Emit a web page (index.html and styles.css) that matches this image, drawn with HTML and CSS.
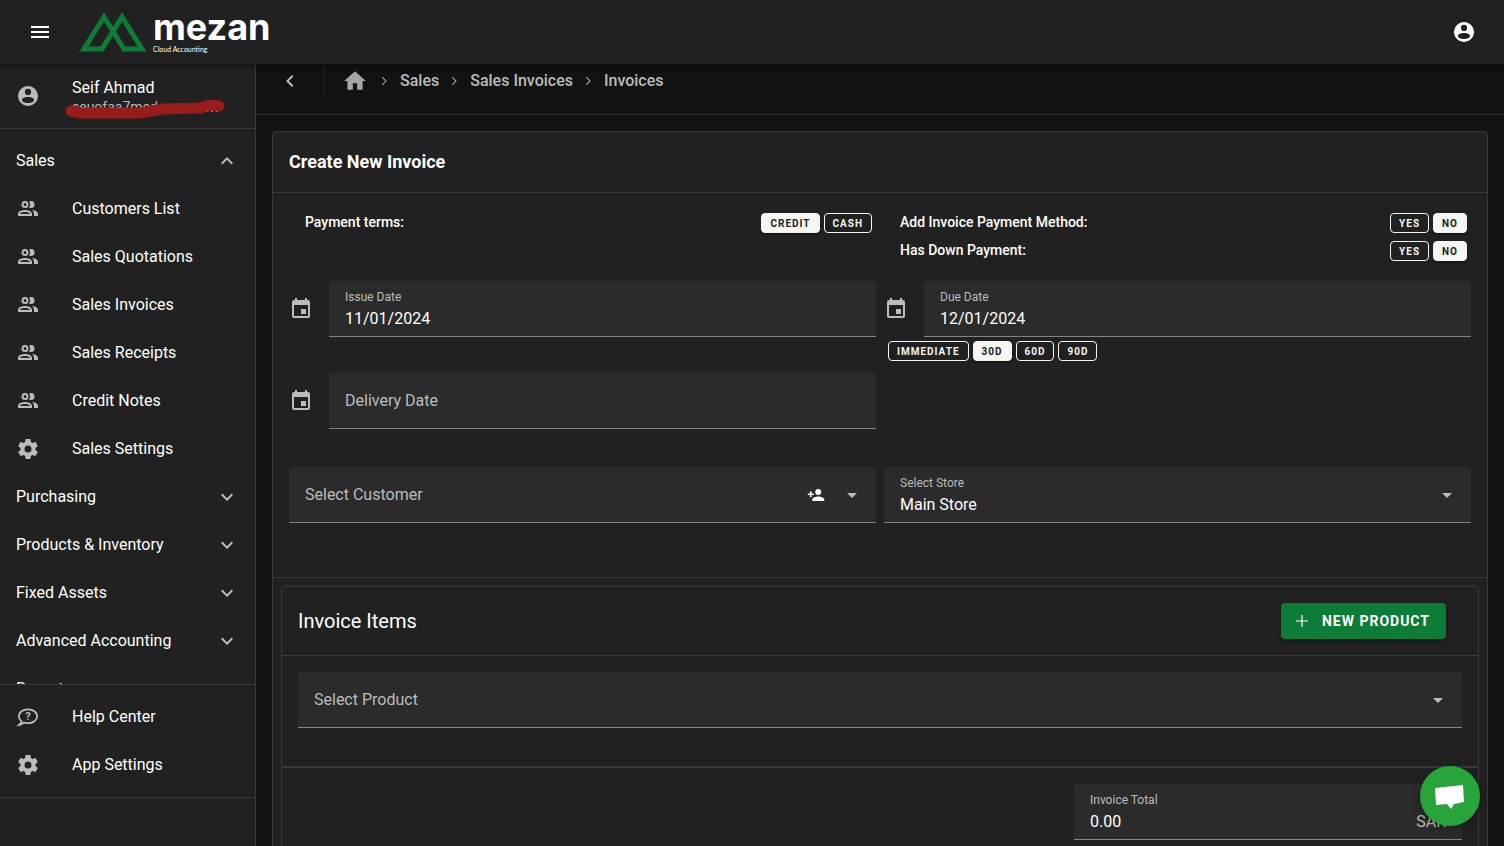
FILE: index.html
```html
<!DOCTYPE html>
<html lang="en">
<head>
  <meta charset="UTF-8">
  <meta name="viewport" content="width=device-width, initial-scale=1.0">
  <title>Mezan - Create New Invoice</title>
  <link rel="stylesheet" href="styles.css">
</head>
<body>
  <!-- Icon set -->
  <svg class="icon-set" aria-hidden="true">
    <symbol id="icon-menu" viewBox="0 0 24 24"><path d="M3 6H21V8H3V6M3 11H21V13H3V11M3 16H21V18H3V16Z"/></symbol>
    <symbol id="icon-account" viewBox="0 0 24 24"><path fill-rule="evenodd" d="M12 2A10 10 0 0 0 2 12A10 10 0 0 0 12 22A10 10 0 0 0 22 12A10 10 0 0 0 12 2ZM12 4.8A3.1 3.1 0 0 1 12 11A3.1 3.1 0 0 1 12 4.8ZM12 13C15.4 13 18 14.2 18 16C18 17.8 15.4 19 12 19C8.600 19 6 17.8 6 16C6 14.2 8.600 13 12 13Z"/></symbol>
    <symbol id="icon-people" viewBox="0 0 24 24"><path d="M13.07 10.41A5 5 0 0 0 13.07 4.59A3.39 3.39 0 0 1 15 4A3.5 3.5 0 0 1 15 11A3.39 3.39 0 0 1 13.07 10.41M5.5 7.5A3.5 3.5 0 1 1 9 11A3.5 3.5 0 0 1 5.5 7.5M7.5 7.5A1.5 1.5 0 1 0 9 6A1.5 1.5 0 0 0 7.5 7.5M16 17V19H2V17S2 13 9 13 16 17 16 17M14 17C13.86 16.22 12.67 15 9 15S4.07 16.31 4 17M15.95 13A5.32 5.32 0 0 1 18 17V19H22V17S22 13.37 15.94 13Z"/></symbol>
    <symbol id="icon-cog" viewBox="0 0 24 24"><path d="M12,15.5A3.5,3.5 0 0,1 8.5,12A3.5,3.5 0 0,1 12,8.5A3.5,3.5 0 0,1 15.5,12A3.5,3.5 0 0,1 12,15.5M19.43,12.97C19.47,12.65 19.5,12.33 19.5,12C19.5,11.67 19.47,11.34 19.43,11L21.54,9.37C21.73,9.22 21.78,8.95 21.66,8.73L19.66,5.27C19.54,5.05 19.27,4.96 19.05,5.05L16.56,6.05C16.04,5.66 15.5,5.32 14.87,5.07L14.5,2.42C14.46,2.18 14.25,2 14,2H10C9.75,2 9.54,2.18 9.5,2.42L9.13,5.07C8.5,5.32 7.96,5.66 7.44,6.05L4.95,5.05C4.73,4.96 4.46,5.05 4.34,5.27L2.34,8.73C2.21,8.95 2.27,9.22 2.46,9.37L4.57,11C4.53,11.34 4.5,11.67 4.5,12C4.5,12.33 4.53,12.65 4.57,12.97L2.46,14.63C2.27,14.78 2.21,15.05 2.34,15.27L4.34,18.73C4.46,18.95 4.73,19.03 4.95,18.95L7.44,17.94C7.96,18.34 8.5,18.68 9.13,18.93L9.5,21.58C9.54,21.82 9.75,22 10,22H14C14.25,22 14.46,21.82 14.5,21.58L14.87,18.93C15.5,18.67 16.04,18.34 16.56,17.94L19.05,18.95C19.27,19.03 19.54,18.95 19.66,18.73L21.66,15.27C21.78,15.05 21.73,14.78 21.54,14.63L19.43,12.97Z"/></symbol>
    <symbol id="icon-down" viewBox="0 0 24 24"><path d="M7.41 8.58L12 13.17L16.59 8.58L18 10L12 16L6 10L7.41 8.58Z"/></symbol>
    <symbol id="icon-up" viewBox="0 0 24 24"><path d="M7.41 15.41L12 10.83L16.59 15.41L18 14L12 8L6 14L7.41 15.41Z"/></symbol>
    <symbol id="icon-left" viewBox="0 0 24 24"><path d="M15.41 16.58L10.83 12L15.41 7.41L14 6L8 12L14 18L15.41 16.58Z"/></symbol>
    <symbol id="icon-right" viewBox="0 0 24 24"><path d="M9 17L14.2 12L9 7L10 6L16 12L10 18L9 17Z"/></symbol>
    <symbol id="icon-caret" viewBox="0 0 24 24"><path d="M7 10L12 15L17 10H7Z"/></symbol>
    <symbol id="icon-home" viewBox="0 0 24 24"><path d="M10 20V14H14V20H19V12H22L12 3L2 12H5V20H10Z"/></symbol>
    <symbol id="icon-calendar" viewBox="0 0 24 24"><path d="M19 19H5V8H19M16 1V3H8V1H6V3H5C3.89 3 3 3.89 3 5V19A2 2 0 0 0 5 21H19A2 2 0 0 0 21 19V5C21 3.89 20.1 3 19 3H18V1M17 12H12V17H17V12Z"/></symbol>
    <symbol id="icon-add-person" viewBox="0 0 24 24"><path d="M15 14C12.33 14 7 15.33 7 18V20H23V18C23 15.33 17.67 14 15 14M6 10V7H4V10H1V12H4V15H6V12H9V10M15 12A4 4 0 0 0 19 8A4 4 0 0 0 15 4A4 4 0 0 0 11 8A4 4 0 0 0 15 12Z"/></symbol>
    <symbol id="icon-plus" viewBox="0 0 24 24"><path d="M20 12.8H12.800V20H11.200V12.800H4V11.200H11.200V4H12.800V11.200H20V12.800Z"/></symbol>
  </svg>

  <header class="app-bar">
    <button class="icon-button" aria-label="Toggle menu"><svg class="icon"><use href="#icon-menu"/></svg></button>
    <a class="logo" href="#">
      <svg class="logo-mark" viewBox="0 0 68 40" aria-hidden="true"><path d="M5 37L25 5L45 37H63L43 5L23 37Z"/></svg>
      <span class="logo-text">
        <span class="logo-name">mezan</span>
        <span class="logo-tagline">Cloud Accounting</span>
      </span>
    </a>
    <button class="icon-button account-button" aria-label="Account"><svg class="icon"><use href="#icon-account"/></svg></button>
  </header>

  <div class="layout">
    <aside class="sidebar">
      <div class="user">
        <svg class="icon"><use href="#icon-account"/></svg>
        <div class="user-info">
          <div class="user-name">Seif Ahmad</div>
          <div class="user-email"><span>seuofaa7med</span><span>.com</span>
            <svg class="scribble" viewBox="0 0 160 20" aria-hidden="true"><path d="M6 11L16 13L76 13Q90 10 98 9L135 8Q146 4 154 6"/></svg>
          </div>
        </div>
      </div>

      <nav class="nav">
        <button class="nav-group">Sales<svg class="icon"><use href="#icon-up"/></svg></button>
        <a class="nav-item" href="#"><svg class="icon"><use href="#icon-people"/></svg>Customers List</a>
        <a class="nav-item" href="#"><svg class="icon"><use href="#icon-people"/></svg>Sales Quotations</a>
        <a class="nav-item" href="#"><svg class="icon"><use href="#icon-people"/></svg>Sales Invoices</a>
        <a class="nav-item" href="#"><svg class="icon"><use href="#icon-people"/></svg>Sales Receipts</a>
        <a class="nav-item" href="#"><svg class="icon"><use href="#icon-people"/></svg>Credit Notes</a>
        <a class="nav-item" href="#"><svg class="icon"><use href="#icon-cog"/></svg>Sales Settings</a>
        <button class="nav-group">Purchasing<svg class="icon"><use href="#icon-down"/></svg></button>
        <button class="nav-group">Products &amp; Inventory<svg class="icon"><use href="#icon-down"/></svg></button>
        <button class="nav-group">Fixed Assets<svg class="icon"><use href="#icon-down"/></svg></button>
        <button class="nav-group">Advanced Accounting<svg class="icon"><use href="#icon-down"/></svg></button>
        <button class="nav-group">Reports<svg class="icon"><use href="#icon-down"/></svg></button>
      </nav>

      <div class="sidebar-footer">
        <a class="nav-item" href="#">
          <svg class="icon" viewBox="0 0 24 24">
            <path class="bubble" d="M5.500 16.200C3.700 14.900 2.900 13.200 2.900 11.200C2.900 7.200 6.900 4.400 12 4.400S21.100 7.200 21.100 11.200S17.100 18.200 12 18.200C10.500 18.200 9.100 18 7.900 17.600C6.600 18.900 4.900 19.800 3 20C4.200 19 5.100 17.800 5.500 16.200Z"/>
            <text x="12" y="15" text-anchor="middle">?</text>
          </svg>Help Center</a>
        <a class="nav-item" href="#"><svg class="icon"><use href="#icon-cog"/></svg>App Settings</a>
      </div>
    </aside>

    <main class="main">
      <nav class="breadcrumbs" aria-label="Breadcrumb">
        <button class="back" aria-label="Back"><svg class="icon"><use href="#icon-left"/></svg></button>
        <a class="home" href="#" aria-label="Home"><svg class="icon"><use href="#icon-home"/></svg></a>
        <svg class="icon separator"><use href="#icon-right"/></svg>
        <a href="#">Sales</a>
        <svg class="icon separator"><use href="#icon-right"/></svg>
        <a href="#">Sales Invoices</a>
        <svg class="icon separator"><use href="#icon-right"/></svg>
        <a href="#">Invoices</a>
      </nav>

      <section class="card">
        <h1 class="card-title">Create New Invoice</h1>

        <div class="invoice-form">
          <div class="options">
            <div class="option">
              <span>Payment terms:</span>
              <div class="chips">
                <button class="chip active" aria-pressed="true">Credit</button>
                <button class="chip" aria-pressed="false">Cash</button>
              </div>
            </div>
          </div>
          <div class="options">
            <div class="option">
              <span>Add Invoice Payment Method:</span>
              <div class="chips">
                <button class="chip" aria-pressed="false">Yes</button>
                <button class="chip active" aria-pressed="true">No</button>
              </div>
            </div>
            <div class="option">
              <span>Has Down Payment:</span>
              <div class="chips">
                <button class="chip" aria-pressed="false">Yes</button>
                <button class="chip active" aria-pressed="true">No</button>
              </div>
            </div>
          </div>

          <div class="date-row">
            <svg class="icon"><use href="#icon-calendar"/></svg>
            <div class="field">
              <div class="field-body">
                <label for="issue-date">Issue Date</label>
                <input type="text" id="issue-date" value="11/01/2024">
              </div>
            </div>
          </div>
          <div>
            <div class="date-row">
              <svg class="icon"><use href="#icon-calendar"/></svg>
              <div class="field">
                <div class="field-body">
                  <label for="due-date">Due Date</label>
                  <input type="text" id="due-date" value="12/01/2024">
                </div>
              </div>
            </div>
            <div class="chips due-chips">
              <button class="chip" aria-pressed="false">Immediate</button>
              <button class="chip active" aria-pressed="true">30d</button>
              <button class="chip" aria-pressed="false">60d</button>
              <button class="chip" aria-pressed="false">90d</button>
            </div>
          </div>

          <div class="date-row">
            <svg class="icon"><use href="#icon-calendar"/></svg>
            <div class="field">
              <div class="field-body">
                <input type="text" id="delivery-date" placeholder="Delivery Date" aria-label="Delivery Date">
              </div>
            </div>
          </div>

          <div class="field customer">
            <div class="field-body">
              <select class="empty" aria-label="Select Customer"><option>Select Customer</option></select>
            </div>
            <button class="add-customer" aria-label="Add customer"><svg class="icon"><use href="#icon-add-person"/></svg></button>
            <svg class="icon caret"><use href="#icon-caret"/></svg>
          </div>
          <div class="field">
            <div class="field-body">
              <label for="store">Select Store</label>
              <select id="store"><option>Main Store</option></select>
            </div>
            <svg class="icon caret"><use href="#icon-caret"/></svg>
          </div>
        </div>

        <div class="items-wrap">
          <section class="items">
            <div class="items-header">
              <h2>Invoice Items</h2>
              <button class="new-product"><svg class="icon"><use href="#icon-plus"/></svg>New Product</button>
            </div>
            <div class="items-body">
              <div class="field">
                <div class="field-body">
                  <select class="empty" aria-label="Select Product"><option>Select Product</option></select>
                </div>
                <svg class="icon caret"><use href="#icon-caret"/></svg>
              </div>
            </div>
            <div class="totals">
              <div class="field total">
                <div class="field-body">
                  <label for="total">Invoice Total</label>
                  <input type="text" id="total" value="0.00" readonly>
                </div>
                <span class="currency">SAR</span>
              </div>
            </div>
          </section>
        </div>
      </section>
    </main>
  </div>

  <button class="chat" aria-label="Open chat">
    <svg viewBox="0 0 60 60" aria-hidden="true"><path d="M15 22L43 19L44 36L34 38L31 43L27 38L16 39Z"/></svg>
  </button>
</body>
</html>
```
FILE: styles.css
```css
* {
  box-sizing: border-box;
}

body {
  margin: 0;
  height: 100vh;
  display: flex;
  flex-direction: column;
  overflow: hidden;
  background: #121212;
  color: #fff;
  font-family: Roboto, sans-serif;
  font-size: 16px;
  line-height: 24px;
}

a {
  color: inherit;
  text-decoration: none;
}

button,
input,
select {
  font: inherit;
  color: inherit;
  background: none;
  border: none;
  padding: 0;
  margin: 0;
}

button {
  cursor: pointer;
}

.icon-set {
  display: none;
}

.icon {
  width: 24px;
  height: 24px;
  flex: none;
  fill: #bcbcbc;
}

/* App bar */
.app-bar {
  height: 64px;
  flex: none;
  display: flex;
  align-items: center;
  padding: 0 28px;
  background: #212121;
  box-shadow: 0 2px 6px rgba(0, 0, 0, 0.4);
  position: relative;
  z-index: 2;
}

.icon-button {
  display: flex;
}

.icon-button .icon {
  fill: #fff;
}

.account-button {
  margin-left: auto;
}

.logo {
  display: flex;
  align-items: center;
  gap: 6px;
  margin-left: 27px;
}

.logo-mark {
  width: 68px;
  height: 40px;
}

.logo-mark path {
  fill: none;
  stroke: #0c7c36;
  stroke-width: 5;
}

.logo-text {
  display: flex;
  flex-direction: column;
}

.logo-name {
  font-family: Inter, sans-serif;
  font-size: 36px;
  line-height: 34px;
  font-weight: 700;
}

.logo-tagline {
  font-family: Lato, sans-serif;
  font-size: 7px;
  line-height: 10px;
}

.layout {
  flex: 1;
  min-height: 0;
  display: flex;
}

/* Sidebar */
.sidebar {
  width: 256px;
  flex: none;
  display: flex;
  flex-direction: column;
  padding-bottom: 48px;
  background: #212121;
  border-right: 1px solid #3a3a3a;
}

.user {
  display: flex;
  align-items: center;
  gap: 32px;
  height: 65px;
  padding: 0 16px;
  border-bottom: 1px solid #3a3a3a;
}

.user-info {
  padding-top: 2px;
}

.user-name {
  line-height: 20px;
}

.user-email {
  position: relative;
  display: flex;
  justify-content: space-between;
  width: 146px;
  font-size: 14px;
  line-height: 18px;
  color: #bcbcbc;
}

.scribble {
  position: absolute;
  left: -7px;
  top: 2px;
  width: 160px;
  height: 20px;
}

.scribble path {
  fill: none;
  stroke: #991b1b;
  stroke-width: 11;
  stroke-linecap: round;
  stroke-linejoin: round;
}

.nav {
  flex: 1;
  min-height: 0;
  padding: 8px 0;
  overflow-y: auto;
  scrollbar-width: none;
}

.nav-group,
.nav-item {
  display: flex;
  align-items: center;
  width: 100%;
  height: 48px;
  padding: 0 16px;
}

.nav-group {
  justify-content: space-between;
}

.nav-item {
  gap: 32px;
}

.sidebar-footer {
  padding: 8px 0;
  border-top: 1px solid #3a3a3a;
  border-bottom: 1px solid #3a3a3a;
}

.bubble {
  fill: none;
  stroke: #bcbcbc;
  stroke-width: 1.8;
}

.nav-item text {
  font-size: 11px;
  font-weight: 700;
}

/* Main */
.main {
  flex: 1;
  min-width: 0;
  overflow-y: auto;
  scrollbar-width: none;
}

.breadcrumbs {
  display: flex;
  align-items: center;
  height: 51px;
  padding: 0 16px 16px;
  border-bottom: 1px solid #333;
  color: #bcbcbc;
  font-weight: 500;
}

.back {
  display: flex;
  align-items: center;
  height: 32px;
  padding: 0 22px 0 6px;
  border-right: 1px solid #242424;
}

.home {
  display: flex;
  margin: 0 7px 0 17px;
}

.home .icon {
  width: 26px;
  height: 26px;
  fill: #a5a5a5;
}

.separator {
  width: 16px;
  height: 16px;
  margin: 0 8px 0 7px;
}

.home + .separator {
  margin: 0 8px 0 1px;
}

.card {
  margin: 16px;
  background: #212121;
  border: 1px solid #3a3a3a;
  border-radius: 4px;
}

.card-title {
  margin: 0;
  padding: 16px;
  font-size: 18px;
  line-height: 28px;
  font-weight: 700;
  border-bottom: 1px solid #3a3a3a;
}

.invoice-form {
  display: grid;
  grid-template-columns: 1fr 1fr;
  column-gap: 8px;
  padding: 16px 16px 54px;
  border-bottom: 1px solid #3a3a3a;
}

.options {
  padding: 0 4px 16px 16px;
}

.option {
  display: flex;
  justify-content: space-between;
  height: 28px;
  font-size: 14px;
  line-height: 26px;
  font-weight: 500;
}

.chips {
  display: flex;
  align-items: center;
  gap: 4px;
}

.chip {
  height: 20px;
  padding: 2px 8px 0;
  border: 1px solid #f5f5f2;
  border-radius: 4px;
  color: #f5f5f2;
  font-size: 10px;
  line-height: 16px;
  font-weight: 700;
  letter-spacing: 1px;
  text-transform: uppercase;
}

.chip.active {
  background: #f5f5f2;
  color: #212121;
  box-shadow: 0 2px 2px rgba(0, 0, 0, 0.3);
}

.due-chips {
  padding: 4px 4px 12px;
}

.date-row {
  display: flex;
  align-items: center;
  gap: 16px;
  height: 56px;
}

.date-row .field {
  flex: 1;
}

/* Filled text fields and drop-downs */
.field {
  display: flex;
  align-items: center;
  height: 56px;
  padding: 0 12px 0 16px;
  background: #2b2b2b;
  border-bottom: 1px solid #848484;
  border-radius: 4px 4px 0 0;
}

.field-body {
  flex: 1;
  min-width: 0;
  display: flex;
  flex-direction: column;
}

.field label {
  font-size: 12px;
  line-height: 20px;
  color: #bcbcbc;
}

.field input,
.field select {
  width: 100%;
  height: 24px;
  outline: none;
  appearance: none;
}

.field input::placeholder {
  color: #bcbcbc;
  opacity: 1;
}

.field .empty {
  color: #bcbcbc;
}

.invoice-form > .field {
  margin-top: 38px;
}

.customer {
  grid-column: 1;
}

.add-customer {
  display: flex;
  margin-right: 15px;
}

.add-customer .icon {
  width: 18px;
  height: 18px;
  fill: #fff;
}

.caret {
  pointer-events: none;
}

/* Invoice items */
.items-wrap {
  padding: 8px;
}

.items {
  border: 1px solid #3a3a3a;
  border-radius: 4px;
}

.items-header {
  display: flex;
  align-items: center;
  justify-content: space-between;
  padding: 16px 32px 16px 16px;
  border-bottom: 1px solid #3a3a3a;
}

.items-header h2 {
  margin: 0;
  font-size: 20px;
  line-height: 32px;
  font-weight: 400;
}

.new-product {
  display: flex;
  align-items: center;
  gap: 11px;
  height: 36px;
  padding: 0 16px 0 12px;
  border-radius: 4px;
  background: #0c7c36;
  box-shadow: 0 2px 3px rgba(0, 0, 0, 0.4);
  font-size: 14px;
  font-weight: 700;
  letter-spacing: 1px;
  text-transform: uppercase;
}

.new-product .icon {
  width: 18px;
  height: 18px;
  fill: #fff;
}

.items-body {
  padding: 16px 16px 38px;
  border-bottom: 2px solid #3a3a3a;
}

.totals {
  display: flex;
  justify-content: flex-end;
  padding: 16px;
}

.total {
  width: calc(100% / 3);
}

.currency {
  margin-top: 20px;
  padding-right: 4px;
  color: #bcbcbc;
}

/* Chat launcher */
.chat {
  position: fixed;
  right: 24px;
  bottom: 20px;
  width: 60px;
  height: 60px;
  border-radius: 50%;
  background: #27a53b;
  box-shadow: 0 2px 8px rgba(0, 0, 0, 0.3);
  z-index: 3;
}

.chat svg {
  display: block;
  fill: #fff;
}
```
